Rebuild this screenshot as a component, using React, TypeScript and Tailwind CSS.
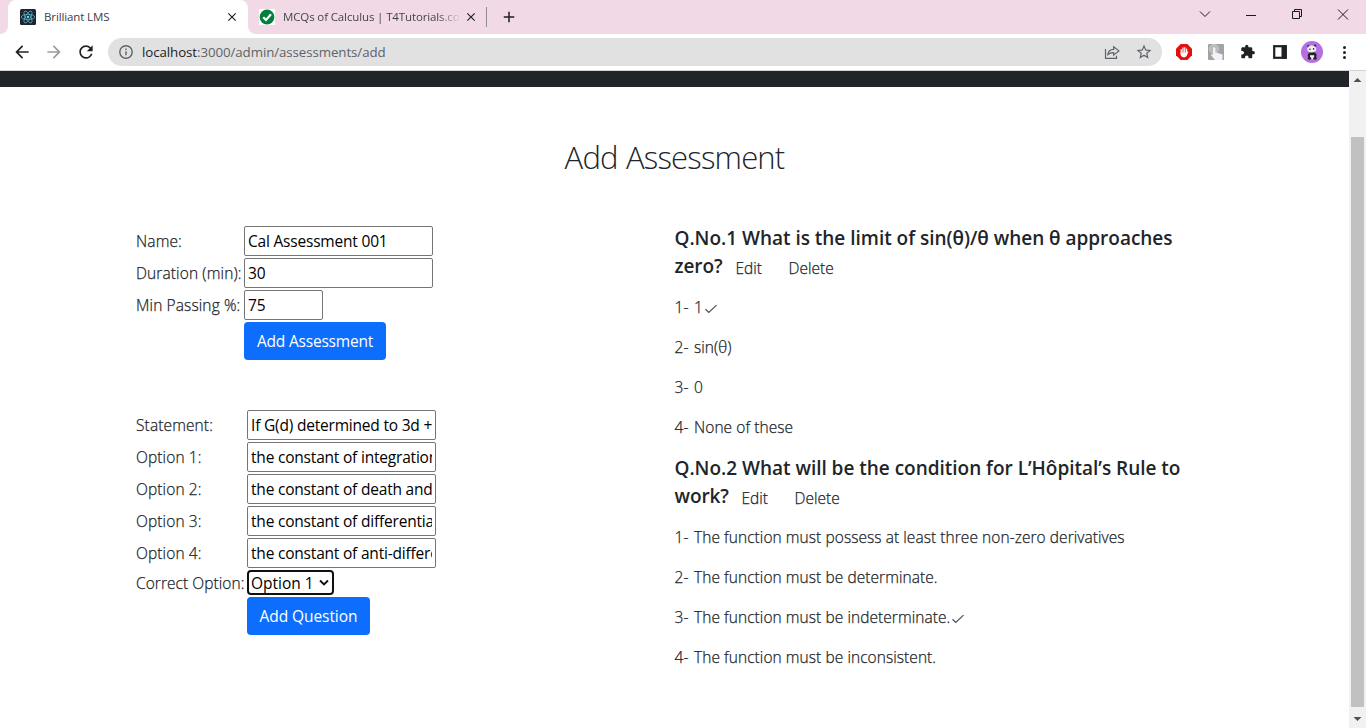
import React from "react";
import { MdArrowBack, MdArrowForward, MdRefresh, MdExtension, MdStarBorder, MdClose, MdAdd } from "react-icons/md";

const ui = "font-['Open_Sans','Noto_Sans',sans-serif]";
const thin = "font-light [-webkit-text-stroke:0.25px_#212529]";

function ReactFavicon() {
  return (
    <svg width="16" height="16" viewBox="0 0 16 16" className="shrink-0">
      <rect width="16" height="16" rx="1.5" fill="#20232a" />
      <g fill="none" stroke="#4fb3cf" strokeWidth="0.8">
        <ellipse cx="8" cy="8" rx="6.7" ry="2.6" />
        <ellipse cx="8" cy="8" rx="6.7" ry="2.6" transform="rotate(60 8 8)" />
        <ellipse cx="8" cy="8" rx="6.7" ry="2.6" transform="rotate(120 8 8)" />
      </g>
      <circle cx="8" cy="8" r="1.3" fill="#61dafb" />
    </svg>
  );
}

function TabStrip() {
  return (
    <div className="flex h-[34px] bg-[#f1dae6]">
      <div className="w-2 bg-white">
        <div className="h-full rounded-br-lg bg-[#f1dae6]" />
      </div>
      <div className="flex w-[240px] items-center rounded-t-lg bg-white pl-3">
        <ReactFavicon />
        <span className="ml-2 w-[181px] whitespace-nowrap text-[11.5px] tracking-[-0.12px] text-[#3c4043]">Brilliant LMS</span>
        <MdClose className="size-[14px] text-[#202124]" />
      </div>
      <div className="w-[11px] bg-[linear-gradient(to_right,white_8px,#f1dae6_8px)]">
        <div className="h-full rounded-bl-lg bg-[#f1dae6]" />
      </div>
      <div className="flex flex-1 items-center">
        <svg width="16" height="16" viewBox="0 0 16 16" className="shrink-0">
          <rect width="16" height="16" fill="#fff" />
          <circle cx="8" cy="8" r="7.4" fill="#00803e" />
          <path d="M4.2 8.2 7 10.9l5-5.600" fill="none" stroke="#fff" strokeWidth="2.2" />
        </svg>
        <span className="ml-2 w-[176px] whitespace-nowrap bg-[linear-gradient(to_right,#3c4043_155px,transparent_178px)] bg-clip-text text-[11.5px] tracking-[-0.13px] text-transparent">MCQs of Calculus | T4Tutorials.co</span>
        <MdClose className="ml-[5px] size-[14px] shrink-0 text-[#202124]" />
        <div className="ml-2 h-5 w-px bg-[#938a90]" />
        <MdAdd className="ml-[13px] size-[18px] shrink-0 text-[#202124]" />
      </div>
      <svg width="170" height="34" viewBox="-10 0 170 34" fill="none" stroke="#1a1a1a">
        <path d="m-6 11.500 5 5 5-5M40 15.500h10M86.500 11.500h7v7h-7zM88.500 11.500v-2h7v7h-2M132 9.500l10 10M142 9.500l-10 10" />
      </svg>
    </div>
  );
}

function Toolbar() {
  return (
    <div className="flex h-[36px] items-center bg-white pl-3">
      <MdArrowBack className="size-5 text-[#202124]" />
      <MdArrowForward className="ml-3 size-5 text-[#9c9c9e]" />
      <MdRefresh className="ml-3 size-5 text-[#202124]" />
      <div className="ml-3 flex h-7 w-[1054px] items-center rounded-full bg-[#e1e1e1] pl-[10px]">
        <svg width="16" height="16" viewBox="0 0 16 16" fill="none" stroke="#5f6368" strokeWidth="1.4">
          <circle cx="8" cy="8" r="6.2" />
          <path d="M8 7.200v4M8 4.400v1.500" />
        </svg>
        <span className="ml-2 flex-1 whitespace-nowrap pt-px text-[13.300px] tracking-[-0.08px] text-[#5f6368]">
          <span className="text-[#202124]">localhost</span>:3000/admin/assessments/add
        </span>
        <svg width="18" height="18" viewBox="0 0 18 18" fill="none" stroke="#5f6368" strokeWidth="1.2" className="mr-[14px]">
          <path d="M2.500 6v9.400h11v-2.600M4.800 11.500c.5-3.500 2.600-5 5.900-5.100V3.700l5.200 4.200-5.200 4.200V9.600c-2.600 0-4.400.5-5.900 1.900z" />
        </svg>
        <MdStarBorder className="mr-[9px] size-[18px] text-[#5f6368]" />
      </div>
      <svg width="192" height="36" viewBox="1162 34 192 36" className="shrink-0">
        <path d="M1180.700 44h6.600l4.700 4.700v6.600l-4.700 4.700h-6.600l-4.700-4.700v-6.600z" fill="#e60f0f" />
        <path d="M1181.200 49.500v4M1183 47.900v5M1184.800 47.700v5M1186.600 49v4" stroke="#fff" strokeWidth="1.250" strokeLinecap="round" />
        <path d="M1180.600 52.500h6.300l.9-1.300.6.500-1.700 4.100-1.500 1.500h-2.600l-2-2z" fill="#fff" />
        <rect x="1208" y="44" width="16" height="16" rx="1" fill="#a3a3a3" />
        <circle cx="1214" cy="49" r="4.300" fill="#b9b9b9" stroke="#cfcfcf" />
        <path d="M1213 48.500c0-1.600 2.400-1.600 2.400 0v4l6 1.400c1.200.3 1.400 1 1.300 1.900l-.5 4.200h-7.200l-4.200-5c.6-1.200 1.400-.8 2.200-.2z" fill="#eef4fa" />
        <rect x="1274.200" y="46.200" width="11.600" height="11.600" fill="#fff" stroke="#202124" strokeWidth="2.200" />
        <rect x="1281.500" y="45.500" width="5" height="13" fill="#202124" />
        <circle cx="1312" cy="52" r="11" fill="#b56fe2" />
        <circle cx="1308.300" cy="46.300" r="1.200" fill="#35323a" />
        <circle cx="1315" cy="45.800" r="1.200" fill="#35323a" />
        <ellipse cx="1312.200" cy="55.500" rx="4.400" ry="3.600" fill="#25232a" />
        <path d="M1310 55.200h4.200v4h-4.200z" fill="#f0edf2" />
        <ellipse cx="1309.500" cy="58.300" rx="1.700" ry="1.500" fill="#25232a" />
        <ellipse cx="1315" cy="58.300" rx="1.700" ry="1.500" fill="#25232a" />
        <ellipse cx="1311.700" cy="49" rx="4.600" ry="3.600" fill="#f0edf2" />
        <circle cx="1309.900" cy="49.300" r=".8" fill="#25232a" />
        <circle cx="1313.600" cy="48.900" r=".8" fill="#25232a" />
        <MdExtension x="1240" y="44" width="16" height="16" color="#202124" />
        <g fill="#202124">
          <circle cx="1344.500" cy="47.500" r="1.500" />
          <circle cx="1344.500" cy="52.500" r="1.500" />
          <circle cx="1344.500" cy="57.500" r="1.500" />
        </g>
      </svg>
    </div>
  );
}

const fieldBase = "block h-[30px] rounded-[2px] border border-[#767676] bg-white px-[3px] text-[15.500px] tracking-[-0.2px] text-black outline-none";

function Field({ label, labelClass, inputClass, value }: { label: string; labelClass: string; inputClass: string; value: string }) {
  return (
    <div className="flex h-8 items-center">
      <label className={`shrink-0 whitespace-nowrap pt-[2px] tracking-[0.120px] ${thin} ${labelClass}`}>{label}</label>
      <input readOnly value={value} className={`${fieldBase} ${inputClass}`} />
    </div>
  );
}

function Check() {
  return (
    <svg width="14" height="12" viewBox="0 0 14 12" fill="none" stroke="#4b4f54" strokeWidth="1.200" className="ml-px mt-px inline-block">
      <path d="m1.500 6.300 3.300 3.200 7.700-7.400" />
    </svg>
  );
}

function Question({ first, last, lastClass, options, answer }: { first: string; last: string; lastClass: string; options: string[]; answer: number }) {
  return (
    <section className="h-[230px]">
      <h5 className="h-7 whitespace-nowrap text-[19px] font-semibold leading-[28px] tracking-[-0.02px]">{first}</h5>
      <div className="flex h-7 items-baseline whitespace-nowrap leading-[28px]">
        <span className={`text-[19px] font-semibold tracking-[-0.1px] ${lastClass}`}>{last}</span>
        <span className={`relative top-px w-[53px] ${thin}`}>Edit</span>
        <span className={`relative top-px ${thin}`}>Delete</span>
      </div>
      <div className="pt-2">
        {options.map((o, i) => (
          <p key={o} className={`flex h-10 items-center whitespace-nowrap tracking-[0.060px] ${thin}`}>
            <span className="w-[19.500px]">{i + 1}-</span>
            {o}
            {i === answer && <Check />}
          </p>
        ))}
      </div>
    </section>
  );
}

export default function App() {
  return (
    <div className={`flex h-[728px] w-[1366px] flex-col overflow-hidden bg-white text-[15.500px] text-[#212529] ${ui}`}>
      <TabStrip />
      <Toolbar />
      <div className="flex flex-1 border-t border-[#d3d3d5]">
        <main className="w-[1349px]">
          <div className="h-4 bg-[#212529]" />
          <h1 className="mt-[46px] h-12 text-center text-[31px] font-light leading-[48px] tracking-[-0.8px] [word-spacing:1px]">Add Assessment</h1>
          <div className="flex pl-[136px] pt-[43px]">
            <div className="w-[538px]">
              <div className="pt-px">
                <Field label="Name:" labelClass="w-[108px]" inputClass="w-[189px]" value="Cal Assessment 001" />
                <Field label="Duration (min):" labelClass="w-[108px]" inputClass="w-[189px]" value="30" />
                <Field label="Min Passing %:" labelClass="w-[108px]" inputClass="w-[79px]" value="75" />
                <button className="ml-[108px] mt-px h-[38px] w-[142px] whitespace-nowrap rounded bg-[#0d6efd] pt-0.5 tracking-[-0.2px] text-white">Add Assessment</button>
              </div>
              <div className="pt-[49px]">
                <Field label="Statement:" labelClass="w-[111px]" inputClass="w-[189px]" value="If G(d) determined to 3d + 5" />
                <Field label="Option 1:" labelClass="w-[111px]" inputClass="w-[189px]" value="the constant of integration" />
                <Field label="Option 2:" labelClass="w-[111px]" inputClass="w-[189px]" value="the constant of death and birth" />
                <Field label="Option 3:" labelClass="w-[111px]" inputClass="w-[189px]" value="the constant of differentiation" />
                <Field label="Option 4:" labelClass="w-[111px]" inputClass="w-[189px]" value="the constant of anti-differentiation" />
                <div className="mt-px flex h-[25px] items-center">
                  <label className={`w-[111px] shrink-0 whitespace-nowrap pt-[2px] tracking-[0.060px] ${thin}`}>Correct Option:</label>
                  <div className="flex h-[25px] w-[87px] items-center justify-between whitespace-nowrap rounded-[4px] border-2 border-[#101010] pl-[2px] pr-[3px] text-black">
                    <span className="pt-[2px]">Option 1</span>
                    <svg width="10" height="8" viewBox="0 0 10 8" fill="none" stroke="#111" strokeWidth="1.900">
                      <path d="m1 1.500 4 4 4-4" />
                    </svg>
                  </div>
                </div>
                <button className="ml-[111px] mt-[2px] h-[38px] w-[123px] whitespace-nowrap rounded bg-[#0d6efd] pt-0.5 tracking-[-0.08px] text-white">Add Question</button>
              </div>
            </div>
            <div className="pl-[0.500px]">
              <Question first="Q.No.1 What is the limit of sin(θ)/θ when θ approaches" last="zero?" lastClass="w-[61px]" options={["1", "sin(θ)", "0", "None of these"]} answer={0} />
              <Question first="Q.No.2 What will be the condition for L’Hôpital’s Rule to" last="work?" lastClass="w-[67px]" options={["The function must possess at least three non-zero derivatives", "The function must be determinate.", "The function must be indeterminate.", "The function must be inconsistent."]} answer={2} />
            </div>
          </div>
        </main>
        <div className="flex w-[17px] flex-col items-center bg-[#f1f1f1]">
          <svg width="17" height="66" viewBox="0 0 17 66"><path d="M4.500 11h8l-4-4z" fill="#505050" /></svg>
          <div className="h-[570px] w-[13px] bg-[#c1c1c1]" />
          <svg width="17" height="21" viewBox="0 0 17 21"><path d="M4.500 10h8l-4 4z" fill="#505050" /></svg>
        </div>
      </div>
    </div>
  );
}
